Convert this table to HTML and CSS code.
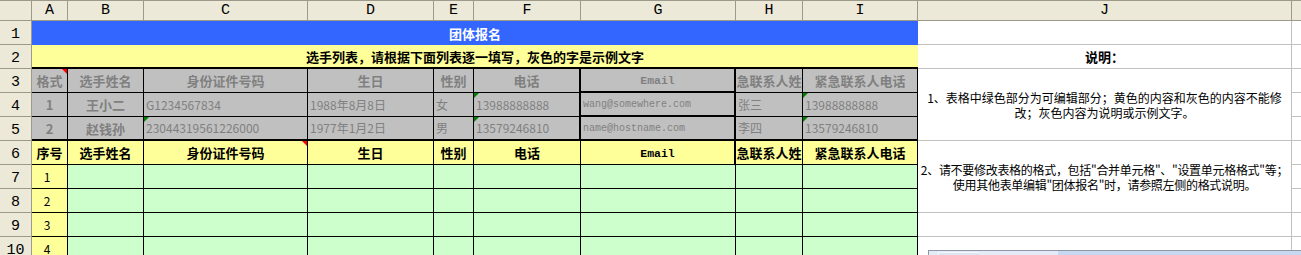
FILE: index.html
```html
<!DOCTYPE html>
<html lang="zh-CN">
<head>
<meta charset="utf-8">
<title>团体报名</title>
<link rel="stylesheet" href="styles.css">
</head>
<body>
<div class="sheet">
  <div class="hd top"></div>
  <div class="hd top col">A</div>
  <div class="hd top col">B</div>
  <div class="hd top col">C</div>
  <div class="hd top col">D</div>
  <div class="hd top col">E</div>
  <div class="hd top col">F</div>
  <div class="hd top col">G</div>
  <div class="hd top col">H</div>
  <div class="hd top col">I</div>
  <div class="hd top col">J</div>
  <div class="hd top col kh"></div>

  <div class="hd rh">1</div>
  <div class="title">团体报名</div>
  <div class="j"></div>
  <div class="k"></div>

  <div class="hd rh">2</div>
  <div class="sub">选手列表，请根据下面列表逐一填写，灰色的字是示例文字</div>
  <div class="j b">说明：</div>
  <div class="k"></div>

  <div class="hd rh">3</div>
  <div class="x gray b tr">格式</div>
  <div class="x gray b">选手姓名</div>
  <div class="x gray b">身份证件号码</div>
  <div class="x gray b">生日</div>
  <div class="x gray b">性别</div>
  <div class="x gray b thickr">电话</div>
  <div class="x gray em thickr thickb">Email</div>
  <div class="x gray b">紧急联系人姓名</div>
  <div class="x gray b">紧急联系人电话</div>
  <div class="j note span3">1、表格中绿色部分为可编辑部分；黄色的内容和灰色的内容不能修<br>改；灰色内容为说明或示例文字。</div>
  <div class="k"></div>

  <div class="hd rh">4</div>
  <div class="x gray b">1</div>
  <div class="x gray b">王小二</div>
  <div class="x gray l">G1234567834</div>
  <div class="x gray l">1988年8月8日</div>
  <div class="x gray l">女</div>
  <div class="x gray l tg thickr">13988888888</div>
  <div class="x gray l mono thickr thickb">wang@somewhere.com</div>
  <div class="x gray l">张三</div>
  <div class="x gray l tg">13988888888</div>
  <div class="k"></div>

  <div class="hd rh">5</div>
  <div class="x gray b thickb">2</div>
  <div class="x gray b thickb">赵钱孙</div>
  <div class="x gray l tg thickb">23044319561226000</div>
  <div class="x gray l thickb">1977年1月2日</div>
  <div class="x gray l thickb">男</div>
  <div class="x gray l tg thickr thickb">13579246810</div>
  <div class="x gray l mono thickr thickb">name@hostname.com</div>
  <div class="x gray l thickb">李四</div>
  <div class="x gray l tg thickb">13579246810</div>
  <div class="k"></div>

  <div class="hd rh">6</div>
  <div class="x yel b">序号</div>
  <div class="x yel b">选手姓名</div>
  <div class="x yel b tr">身份证件号码</div>
  <div class="x yel b">生日</div>
  <div class="x yel b">性别</div>
  <div class="x yel b">电话</div>
  <div class="x yel em thickr">Email</div>
  <div class="x yel b">紧急联系人姓名</div>
  <div class="x yel b">紧急联系人电话</div>
  <div class="j note tight span3">2、请不要修改表格的格式，包括"合并单元格"、"设置单元格格式"等；<br>使用其他表单编辑"团体报名"时，请参照左侧的格式说明。</div>
  <div class="k"></div>

  <div class="hd rh">7</div>
  <div class="x yel num">1</div>
  <div class="x grn"></div>
  <div class="x grn"></div>
  <div class="x grn"></div>
  <div class="x grn"></div>
  <div class="x grn"></div>
  <div class="x grn"></div>
  <div class="x grn"></div>
  <div class="x grn"></div>
  <div class="k"></div>

  <div class="hd rh">8</div>
  <div class="x yel num">2</div>
  <div class="x grn"></div>
  <div class="x grn"></div>
  <div class="x grn"></div>
  <div class="x grn"></div>
  <div class="x grn"></div>
  <div class="x grn"></div>
  <div class="x grn"></div>
  <div class="x grn"></div>
  <div class="k"></div>

  <div class="hd rh">9</div>
  <div class="x yel num">3</div>
  <div class="x grn"></div>
  <div class="x grn"></div>
  <div class="x grn"></div>
  <div class="x grn"></div>
  <div class="x grn"></div>
  <div class="x grn"></div>
  <div class="x grn"></div>
  <div class="x grn"></div>
  <div class="j"></div>
  <div class="k"></div>

  <div class="hd rh">10</div>
  <div class="x yel num">4</div>
  <div class="x grn"></div>
  <div class="x grn"></div>
  <div class="x grn"></div>
  <div class="x grn"></div>
  <div class="x grn"></div>
  <div class="x grn"></div>
  <div class="x grn"></div>
  <div class="x grn"></div>
  <div class="j"></div>
  <div class="k"></div>
</div>
<div class="toolbar"><span class="tb-btn"></span></div>
</body>
</html>
```

FILE: styles.css
```css
html, body {
  margin: 0;
  padding: 0;
  background: #ffffff;
  overflow: hidden;
}

.sheet {
  display: grid;
  grid-template-columns: 32px 36px 76px 164px 126px 40px 107px 155px 67px 115px 374px 9px;
  grid-template-rows: 21px repeat(10, 24px);
  font-family: "Noto Sans CJK SC", "Liberation Sans", sans-serif;
  font-size: 12px;
  color: #000;
}

.sheet > div {
  box-sizing: border-box;
  display: flex;
  align-items: center;
  justify-content: center;
  overflow: hidden;
  white-space: nowrap;
  position: relative;
  line-height: 1;
}

/* headers */
.hd {
  background: #ece9d8;
  border-right: 1px solid #9d9a8c;
  border-bottom: 1px solid #9d9a8c;
  font-family: "Liberation Mono", "DejaVu Sans Mono", monospace;
  font-size: 15px;
}
.sheet > .top { border-top: 1px solid #9d9a8c; }
.sheet > .col { align-items: flex-end; padding-bottom: 2px; }
.sheet > .rh { align-items: flex-end; padding-bottom: 2px; }
.sheet > .kh { border-right: none; }

/* merged title rows */
.sheet > .title {
  grid-column: span 9;
  background: #3366ff;
  color: #ffffff;
  font-weight: 700;
  font-size: 13px;
}
.sheet > .sub {
  grid-column: span 9;
  background: #ffff99;
  border-bottom: 2px solid #000;
  font-weight: 700;
  font-size: 13px;
}

/* explanation column */
.j {
  background: #ffffff;
  border-right: 1px solid #c0c0c0;
  border-bottom: 1px solid #c0c0c0;
}
.sheet > .span3 { grid-row: span 3; }
.sheet > .note {
  text-align: center;
  line-height: 15px;
  padding: 0;
}
.sheet > .tight { letter-spacing: -0.3px; }
.k {
  background: #ffffff;
  border-bottom: 1px solid #c0c0c0;
}

/* table cells */
.x {
  border-right: 1px solid #000;
  border-bottom: 1px solid #000;
}
.gray { background: #c0c0c0; color: #808080; }
.yel { background: #ffff99; }
.grn { background: #ccffcc; }
.b { font-weight: 700; font-size: 13px; }
.sheet > .l { justify-content: flex-start; padding-left: 2px; }
.sheet > .num { padding-right: 5px; }
.sheet > .mono {
  font-family: "Liberation Mono", "DejaVu Sans Mono", monospace;
  font-size: 10px;
  padding-top: 2px;
}
.sheet > .em {
  font-family: "Liberation Mono", "DejaVu Sans Mono", monospace;
  font-size: 11.5px;
  font-weight: 700;
  padding-top: 2px;
}
.sheet > .thickr { border-right-width: 2px; }
.sheet > .thickb { border-bottom-width: 2px; }

/* cell markers */
.tg::before {
  content: "";
  position: absolute;
  left: 0;
  top: 0;
  border-top: 5px solid #008000;
  border-right: 5px solid transparent;
}
.tr::after {
  content: "";
  position: absolute;
  right: 0;
  top: 0;
  border-top: 5px solid #ff0000;
  border-left: 5px solid transparent;
}

/* floating toolbar peeking at the bottom */
.toolbar {
  position: absolute;
  left: 928px;
  top: 250px;
  width: 380px;
  height: 20px;
  box-sizing: border-box;
  border-top: 1px solid #8d97a8;
  border-left: 1px solid #8d97a8;
  background: linear-gradient(to right, #e4ebf6 0, #e4ebf6 129px, #c8d8f1 129px, #c8d8f1 100%);
}
.tb-btn {
  position: absolute;
  left: 9px;
  top: 1px;
  width: 40px;
  height: 10px;
  background: #dbe5f4;
  border-top: 1px solid #f4f7fc;
  border-left: 1px solid #f4f7fc;
}
```
